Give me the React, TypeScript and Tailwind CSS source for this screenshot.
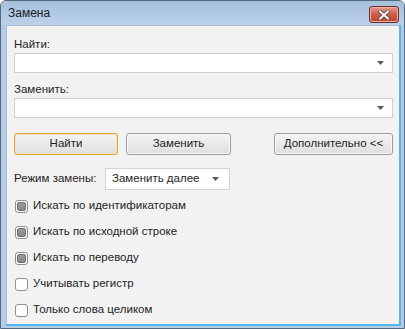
import React from "react";

const font = { fontFamily: '"Liberation Sans", Arial, sans-serif' };

function Arrow() {
  return (
    <svg width="7" height="4" viewBox="0 0 7 4" className="block">
      <path d="M0 0H7L3.5 4Z" fill="#5a5a5a" />
    </svg>
  );
}

function ComboInput() {
  return (
    <div className="flex h-[20px] w-full items-center justify-end border border-[#cfcfcf] bg-white pr-[8px]">
      <Arrow />
    </div>
  );
}

function Button({ label, focused, width }: { label: string; focused?: boolean; width: string }) {
  return (
    <div
      className={`flex h-[22px] ${width} items-center justify-center rounded-[3px] border bg-gradient-to-b from-[#f4f4f4] to-[#dedede] text-[11.5px] text-[#1e1e1e] ${
        focused ? "border-[#e2a23e] shadow-[inset_0_0_0_1px_#fbe3b8]" : "border-[#9c9c9c] shadow-[inset_0_0_0_1px_#fafafa]"
      }`}
    >
      {label}
    </div>
  );
}

function Check({ label, filled }: { label: string; filled?: boolean }) {
  return (
    <div className="flex h-[16px] items-center gap-[5px]">
      <div className="ml-[1px] flex h-[13px] w-[13px] items-center justify-center rounded-[3px] border border-[#8e8f8f] bg-white">
        {filled && <div className="h-[9px] w-[9px] rounded-[2px] border border-[#6f6f6f] bg-gradient-to-b from-[#9a9a9a] to-[#8a8a8a]" />}
      </div>
      <span className="text-[11.5px] text-[#1e1e1e]">{label}</span>
    </div>
  );
}

export default function App() {
  return (
    <div style={font} className="flex h-[329px] w-[405px] flex-col overflow-hidden rounded-t-[6px] border border-[#55697f] bg-[#b4cce6]">
      {/* title bar */}
      <div className="flex h-[24px] shrink-0 items-center justify-between bg-gradient-to-b from-[#a6bfdc] to-[#bcd2eb] pl-[7px] pr-[5px]">
        <span className="text-[12px] text-[#1b1b1b]">Замена</span>
        <div className="mt-[3px] flex h-[17px] w-[30px] items-center justify-center rounded-[3px] border border-[#6e2a22] bg-gradient-to-b from-[#e29e92] via-[#cd5b49] to-[#c3412e] shadow-[inset_0_0_0_1px_#eab3a8]">
          <svg width="12" height="10" viewBox="0 0 12 10">
            <path d="M2 1.5L10 8.5M10 1.5L2 8.5" stroke="#4b3a38" strokeWidth="3.2" strokeLinecap="square" />
            <path d="M2 1.5L10 8.5M10 1.5L2 8.5" stroke="#ffffff" strokeWidth="2" strokeLinecap="square" />
          </svg>
        </div>
      </div>

      {/* body */}
      <div className="flex flex-1 pb-[2px] pl-[5px] pr-[3px]">
        <div className="flex flex-1 flex-col border-b-[2px] border-r-[2px] border-[#53b6ea] bg-[#f2f2f2]">
          <div className="flex flex-1 flex-col border-l border-t border-[#a9bed5] pl-[7px] pr-[6px] pt-[10px] text-[11.5px]">
            <div className="h-[16px] leading-[16px] text-[#1e1e1e]">Найти:</div>
            <div className="mt-[1px]">
              <ComboInput />
            </div>
            <div className="mt-[8px] h-[16px] leading-[16px] text-[#1e1e1e]">Заменить:</div>
            <div className="mt-[1px]">
              <ComboInput />
            </div>

            <div className="mt-[15px] flex items-center">
              <Button label="Найти" focused width="w-[104px]" />
              <div className="ml-[8px]">
                <Button label="Заменить" width="w-[105px]" />
              </div>
              <div className="ml-auto">
                <Button label="Дополнительно <<" width="w-[119px]" />
              </div>
            </div>

            <div className="mt-[13px] flex items-center">
              <span className="w-[91px] text-[#1e1e1e]">Режим замены:</span>
              <div className="flex h-[22px] w-[125px] items-center justify-between border border-[#d3d3d3] bg-white pl-[6px] pr-[10px]">
                <span className="text-[#1e1e1e]">Заменить далее</span>
                <Arrow />
              </div>
            </div>

            <div className="mt-[8px] flex flex-col gap-[10px]">
              <Check label="Искать по идентификаторам" filled />
              <Check label="Искать по исходной строке" filled />
              <Check label="Искать по переводу" filled />
              <Check label="Учитывать регистр" />
              <Check label="Только слова целиком" />
            </div>
          </div>
        </div>
      </div>
    </div>
  );
}
